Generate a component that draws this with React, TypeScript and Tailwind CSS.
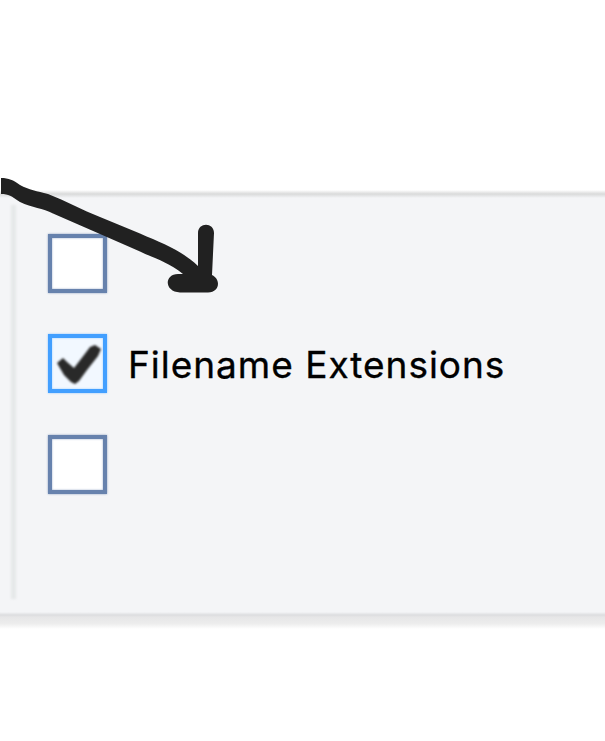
type OptionProps = { checked?: boolean; label?: string };

function Option({ checked = false, label = '' }: OptionProps) {
  return (
    <label className="flex h-[60px] items-center">
      <span
        className={
          checked
            ? 'flex size-[59px] shrink-0 border-[4px] border-[#429fff] bg-[#f2f8ff] shadow-[0_0_2px_#8fc5ff,inset_0_0_2px_#8fc5ff]'
            : 'flex size-[59px] shrink-0 border-[4px] border-[#6782ad] bg-white shadow-[0_0_2px_#8ca0c2,inset_0_0_2px_#8ca0c2]'
        }
      >
        {checked && (
          <svg viewBox="0 0 52 52" className="size-[52px] shrink-0 overflow-visible blur-[1px]" aria-hidden="true">
            <path d="M5 25 L11 20 L15 24 L22 30 L32 17 L38 9 L43 7 L49 11 L46 18 L35 32 L27 43 L23 46 L19 44 L12 37 Z" fill="#292929" />
          </svg>
        )}
      </span>
      {label && (
        <span className="ml-[21px] mt-[2px] whitespace-nowrap font-['Inter',sans-serif] text-[37px] leading-[60px] tracking-[0.98px] text-black [-webkit-text-stroke:0.35px_black]">
          {label}
        </span>
      )}
    </label>
  );
}

export default function App() {
  return (
    <main className="relative h-[741px] w-[605px] overflow-hidden bg-white pt-[190px]">
      <div className="h-[8px] bg-linear-to-b from-white via-[#d9dada] to-[#f4f5f7]" />
      <section className="flex h-[414px] bg-[#f4f5f7]">
        <div className="ml-[11px] mt-[7px] h-[394px] w-[5px] shrink-0 bg-[#e6e8e9] blur-[0.8px]" />
        <div className="ml-[32px] mt-[35px] flex flex-col gap-[40.5px]">
          <Option />
          <Option checked label="Filename Extensions" />
          <Option />
        </div>
      </section>
      <div className="h-[5px] bg-linear-to-b from-[#f4f5f7] via-[#dcdddf] via-60% to-[#e6e6e7]" />
      <div className="h-[12px] bg-linear-to-b from-[#e6e6e7] via-[#ededed] via-55% to-white" />
      <svg className="pointer-events-none absolute left-0 top-0" width="605" height="741" viewBox="0 0 605 741" aria-hidden="true">
        <path
          d="M1 178 C9 178 13 180 20 185 C29 190 37 191 48 194 C66 201 82 210 100 217 L140 233.5 C164 244 181 250 198 266 L198 233 C198 222 214 222 214 233 L212 275 C221 279 220 292.5 208 292.5 H180 C164 292 164 274 178 274 H183 C168 262 158 260 140 251.5 L100 234 L53 213.5 C43 208 32 208 20 202 C11 196 9 194 1 194 Z"
          fill="#212121"
        />
      </svg>
    </main>
  );
}
